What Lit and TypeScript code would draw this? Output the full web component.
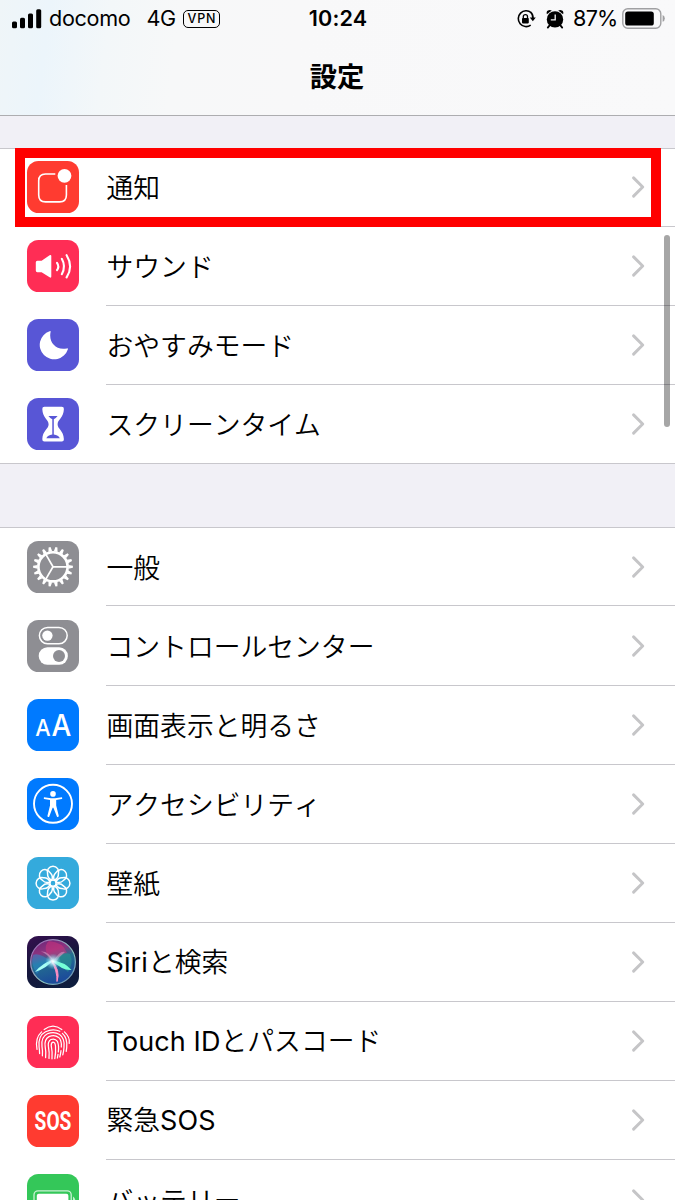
import { LitElement, html, svg, css } from "lit";
import { customElement, property } from "lit/decorators.js";

const line = (w: number, d: string) =>
  svg`<path d=${d} fill="none" stroke="#fff" stroke-width=${w} stroke-linecap="round" stroke-linejoin="round"/>`;

const range = (n: number) => Array.from({ length: n }, (_, i) => i);

const glyphs: Record<string, unknown> = {
  notify: svg`<path d="M28.3 13H18.5Q11.7 13 11.7 19.8V34Q11.7 40.9 18.5 40.9H32.6Q39.4 40.9 39.4 34V24" fill="none" stroke="#fff" stroke-width="1.6"/>
    <circle cx="37.5" cy="14.8" r="6.9" fill="#fff"/>`,
  sound: svg`<path d="M10.3 20.7H14.6L22.6 15.2Q24.3 14.3 24.3 16V36.6Q24.3 38.3 22.6 37.3L14.6 32.2H10.3Q8.8 32.2 8.8 30.6V22.2Q8.8 20.7 10.3 20.7Z" fill="#fff"/>
    ${line(2.1, "M30 22.8Q32.6 26.5 30 30.2")}${line(2.1, "M34.8 18.8Q39.2 26.5 34.8 34.2")}${line(2.1, "M39.6 15.2Q46.6 26.5 39.6 37.4")}`,
  moon: svg`<path d="M22.6 12.2Q23.9 11.6 23.6 13C21.4 23 28.6 31.8 39.8 29.4Q41.4 29 40.8 30.4A14.4 14.4 0 1 1 22.6 12.2Z" fill="#fff"/>`,
  glass: svg`<path d="M17.4 8.8H34.8Q37 8.8 36.9 11C36.6 20 30.6 21.4 30.6 26.2C30.6 31 36.6 32.4 36.9 41.2Q37 43.4 34.8 43.4H17.4Q15.2 43.4 15.3 41.2C15.6 32.4 21.6 31 21.6 26.2C21.6 21.4 15.6 20 15.3 11Q15.2 8.8 17.4 8.8Z" fill="#fff"/>
    <path d="M21.4 18.1H30.6Q28.8 20.4 26.8 21.2V36.6Q31.4 37.4 32.8 40.2H19.3Q20.8 37.4 25.3 36.6V21.2Q23.2 20.4 21.4 18.1Z" fill="#5856d6"/>`,
  gear: svg`<g transform="translate(26 25.8)">
    <circle r="14.6" fill="none" stroke="#fff" stroke-width="2.6"/>
    ${range(18).map(i => svg`<path d="M15.4 -1.9L19.9 -1V1L15.4 1.9Z" fill="#fff" transform="rotate(${i * 20})"/>`)}
    ${[0, 120, 240].map(a => svg`<path d="M0 0H14" stroke="#fff" stroke-width="1.7" transform="rotate(${a})"/>`)}
    </g>`,
  toggles: svg`<rect x="12.4" y="7.4" width="27.8" height="16.4" rx="8.2" fill="none" stroke="#fff" stroke-width="1.5"/>
    <circle cx="20.4" cy="15.6" r="5.2" fill="#fff"/>
    <rect x="11.7" y="27.3" width="29.2" height="17.4" rx="8.7" fill="#fff"/><circle cx="32" cy="36" r="6" fill="#8e8e93"/>`,
  display: svg`<text x="8.3" y="36.8" font-size="23" textLength="15.4" lengthAdjust="spacingAndGlyphs" class="aa">A</text>
    <text x="24.6" y="36.8" font-size="30" textLength="19.8" lengthAdjust="spacingAndGlyphs" class="aa">A</text>`,
  access: svg`<circle cx="26" cy="25.8" r="19" fill="none" stroke="#fff" stroke-width="1.9"/>
    <circle cx="26" cy="15.9" r="2.8" fill="#fff"/>
    <path d="M17.1 19.2L24 20.2H28L34.9 19.2Q35.8 20.2 34.8 20.9L29.2 22V27.6L31.8 38Q31.4 39.4 30 38.7L26.4 29.8H25.6L22.2 38.7Q20.6 39.4 20.4 38L23 27.6V22L17.2 20.9Q16.2 20.2 17.1 19.2Z" fill="#fff"/>`,
  flower: svg`<g transform="translate(26 26.2)" fill="none" stroke="#fff" stroke-width="1.5">
    <circle r="3.1"/>
    ${range(8).map(i => svg`<path d="M2.9 -1.2C4.2 -4 6.4 -5.6 9.4 -5.4A5.7 5.7 0 1 1 9.4 5.4C6.4 5.6 4.2 4 2.9 1.2" transform="rotate(${i * 45})"/>`)}
    </g>`,
  siri: svg`<defs>
      <linearGradient id="orb" x1="0" y1="0" x2="0.3" y2="1"><stop offset="0" stop-color="#6b2378"/><stop offset=".35" stop-color="#8c3480"/><stop offset=".55" stop-color="#24708f"/><stop offset="1" stop-color="#1c4c9a"/></linearGradient>
      <radialGradient id="glow"><stop offset="0" stop-color="#fff"/><stop offset=".35" stop-color="#c9f4ff" stop-opacity=".75"/><stop offset="1" stop-color="#6ad5e8" stop-opacity="0"/></radialGradient>
      <linearGradient id="ring" x1="0" y1="0" x2="1" y2="1"><stop offset="0" stop-color="#a05ab4"/><stop offset=".6" stop-color="#8fc9c0"/><stop offset="1" stop-color="#5d7fb0"/></linearGradient>
    </defs>
    <circle cx="26" cy="26" r="22.4" fill="url(#orb)" stroke="url(#ring)" stroke-width="1.2"/>
    <path d="M26 26Q32 14 43 18Q47 27 41 36Q34 29 26 26Z" fill="#2a9c92" opacity=".5"/>
    <path d="M25 26Q14 12 22 5Q36 6 40 17Q34 17 25 26Z" fill="#d8337c" opacity=".5"/>
    <path d="M25 26Q12 16 6 19Q3 28 10 38Q17 28 25 26Z" fill="#2a8fd2" opacity=".5"/>
    <path d="M14 15.5Q22 15 26.5 25Q33 14 38 16Q33 20 28 27Q19 17 14 15.5Z" fill="#f2b4dc" opacity=".45"/>
    <path d="M8 36Q15 27 27 23.5Q20 32 8 36Z" fill="#a6fff4"/>
    <path d="M24 24Q38 26 44.5 34Q36 35 24 24Z" fill="#76ffd6"/>
    <path d="M24 24Q34 34 30 45.5Q30.5 35 24 24Z" fill="#ff8fc4" stroke="#ff8fc4" stroke-width="1"/>
    <circle cx="26" cy="25.5" r="8" fill="url(#glow)"/>`,
  touch: svg`${[
    "M17.2 13.6Q26 6.8 34.8 13.6",
    "M10 33.4Q7.8 22 14.6 15.9",
    "M37.4 15.9Q43.4 21.4 42.2 27.4",
    "M12.6 37.6Q12.6 34.5 12.1 31Q10.9 19.5 18.6 15.7Q26 12.2 32.8 15.3",
    "M35.4 17.4Q40.7 22 39.7 31.6L39.2 35.4",
    "M15.4 39.8Q15.8 35 15 30.6Q13.8 21 20.4 17.8Q27 14.9 32.6 18.5Q38 22.4 37 31.2Q36.8 35 35.8 38.8",
    "M18.6 41.6Q19.2 36 18.2 30.8Q17 23.4 22 20.6Q27.4 18.2 31.6 21.4Q34.9 24.4 34.3 31",
    "M34 34.6Q33.6 38 32.8 41",
    "M22 42.4Q22.6 36.6 21.4 30.4Q20.6 25.4 24 23.5Q28 22 30.4 25.4Q32.2 29.4 31.3 36",
    "M31 38.4L30.4 42",
    "M25 42.8Q25.6 36 24.2 29.4Q24.2 26.2 26.2 26.2Q28.2 26.4 28.5 30.2Q29 36.5 27.8 42.6",
  ].map(d => line(1.25, d))}`,
  sos: svg`<g transform="translate(26 34.9) scale(.76 1)"><text x="0" y="0" font-size="25.2" text-anchor="middle" class="sos">SOS</text></g>`,
  battery: svg`<rect x="7" y="16.8" width="37.2" height="20" rx="4" fill="none" stroke="#c9f2d3" stroke-width="1.3"/>
    <rect x="9.8" y="19.8" width="31.6" height="14" rx="2" fill="#fff"/><path d="M46 22.5Q48.6 24 48.4 28H46Z" fill="#c9f2d3"/>`,
};

@customElement("settings-row")
export class SettingsRow extends LitElement {
  @property() icon = "";
  @property() color = "";
  @property() label = "";

  static styles = css`
    :host { display: flex; height: 79.15px; box-sizing: border-box; padding-left: 27px; background: #fff; }
    :host([first]) { border-top: 1px solid #c8c7cc; }
    .tile { flex: none; width: 52px; height: 52px; border-radius: 11.5px; margin: 13.4px 27px 0 0; overflow: hidden; }
    :host([first]) .tile { margin-top: 12.6px; }
    .tile svg { display: block; }
    .body { flex: 1; display: flex; align-items: center; justify-content: space-between; padding: 0 30px 0 0.5px; box-sizing: border-box; border-bottom: 1px solid #c8c7cc; }
    :host([last]) { padding-left: 0; border-bottom: 1px solid #c8c7cc; }
    :host([last]) .tile { margin-left: 27px; }
    :host([last]) .body { border-bottom: 0; }
    .label { font: 400 26.8px/40px "Noto Sans CJK JP", sans-serif; font-weight: 350; font-kerning: none; color: #000; white-space: nowrap; }
    .latin { font: 400 27px/40px Inter, sans-serif; letter-spacing: 0.1px; }
    .aa { font-family: Inter, sans-serif; font-weight: 500; fill: #fff; }
    .sos { font-family: Roboto, sans-serif; font-weight: 700; fill: #fff; }
  `;

  render() {
    const parts = this.label.split(/([A-Za-z ]+)/).filter(Boolean);
    return html`
      <div class="tile" style="background:${this.color}">
        <svg width="52" height="52" viewBox="0 0 52 52">${glyphs[this.icon]}</svg>
      </div>
      <div class="body">
        <span class="label">${parts.map(p => (/[A-Za-z]/.test(p) ? html`<span class="latin">${p}</span>` : p))}</span>
        <svg width="14" height="22" viewBox="0 0 14 22"><path d="M2.6 1.9L11.7 11L2.6 20.1" fill="none" stroke="#c5c5c7" stroke-width="2.9" stroke-linecap="round" stroke-linejoin="round"/></svg>
      </div>`;
  }
}

const groups = [
  [
    ["notify", "#ff3b30", "通知"],
    ["sound", "#ff2d55", "サウンド"],
    ["moon", "#5856d6", "おやすみモード"],
    ["glass", "#5856d6", "スクリーンタイム"],
  ],
  [
    ["gear", "#8e8e93", "一般"],
    ["toggles", "#8e8e93", "コントロールセンター"],
    ["display", "#007aff", "画面表示と明るさ"],
    ["access", "#007aff", "アクセシビリティ"],
    ["flower", "#34aadc", "壁紙"],
    ["siri", "linear-gradient(160deg,#35104f,#17163c 45%,#0d1f3f)", "Siriと検索"],
    ["touch", "#ff2d55", "Touch IDとパスコード"],
    ["sos", "#ff3b30", "緊急SOS"],
    ["battery", "#34c759", "バッテリー"],
  ],
];

@customElement("app-root")
export class AppRoot extends LitElement {
  static styles = css`
    :host { display: block; position: relative; width: 675px; height: 1200px; overflow: hidden; background: #f1f0f6; font-family: Inter, sans-serif; color: #000; }
    .header { height: 116px; box-sizing: border-box; border-bottom: 1px solid #adadb0; background: linear-gradient(97deg, #eff5f8 0, #ecf5fb 50px, #f3f7f9 110px, #f7f8f9 180px, #f8f8f9 300px, #f9f9fa 100%); }
    .status { display: grid; grid-template-columns: 1fr auto 1fr; align-items: center; height: 37px; padding: 0 10px 0 12px; font-size: 21.6px; line-height: 37px; }
    .left, .right { display: flex; align-items: center; }
    .right { justify-content: flex-end; }
    .status svg { display: block; flex: none; }
    .carrier { margin-left: 7px; letter-spacing: -0.3px; }
    .net { margin-left: 16px; letter-spacing: -0.6px; }
    .vpn { margin-left: 8px; width: 37px; height: 18px; box-sizing: border-box; border: 1.6px solid #000; border-radius: 5px; font-size: 12.5px; line-height: 15.4px; text-align: center; letter-spacing: 0.8px; font-weight: 500; }
    .time { font-weight: 600; letter-spacing: 0.1px; margin-right: 1px; }
    .alarm { margin: 0 9px 0 10px; }
    .pct { letter-spacing: -0.8px; margin-right: 4.5px; }
    .title { margin: 17px 0 0; padding-right: 1px; font: 700 27.3px/42px "Noto Sans CJK JP", sans-serif; text-align: center; }
    .group { margin-top: 31.6px; background: #fff; }
    .group + .group { margin-top: 63.2px; }
    .mark { position: absolute; left: 14.5px; top: 148px; width: 646px; height: 79px; box-sizing: border-box; border: 10px solid #f00; }
    .scroll { position: absolute; left: 664px; top: 235px; width: 6px; height: 192px; border-radius: 3px; background: rgba(0, 0, 0, 0.35); }
  `;

  render() {
    return html`
      <div class="header">
        <div class="status">
          <div class="left">
            <svg width="30" height="20" viewBox="0 0 30 20"><rect x="0" y="12.6" width="5" height="6.6" rx="1.5"/><rect x="8" y="8.8" width="5" height="10.4" rx="1.5"/><rect x="16" y="4.6" width="5" height="14.6" rx="1.5"/><rect x="24.2" y=".2" width="5" height="19" rx="1.5"/></svg>
            <span class="carrier">docomo</span><span class="net">4G</span><span class="vpn">VPN</span>
          </div>
          <span class="time">10:24</span>
          <div class="right">
            <svg width="20" height="20" viewBox="0 0 20 20"><path d="M15.2 3.6A7.9 7.9 0 1 0 14.7 16.2M14.6 3.2Q17.4 5.8 17 10" fill="none" stroke="#000" stroke-width="1.6"/><path d="M13.8 8.6H19.8L16.8 12.2Z"/><rect x="6" y="9" width="6.8" height="5.4" rx=".8"/><path d="M7.3 9.4V7.6Q7.3 5.6 9.4 5.6T11.5 7.6V9.4" fill="none" stroke="#000" stroke-width="1.3"/></svg>
            <svg class="alarm" width="18" height="20" viewBox="0 0 18 20"><circle cx="9" cy="10.4" r="8.2"/><path d="M.9 5.2Q0 2.4 2 1.4T5.8 1.6ZM17.1 5.2Q18 2.4 16 1.4T12.2 1.6Z"/><path d="M3.6 16.4L1.8 18.6M14.4 16.4L16.2 18.6" stroke="#000" stroke-width="1.8" stroke-linecap="round"/><path d="M9.2 5.4V10.8H4.8" fill="none" stroke="#f8f8f9" stroke-width="1.3"/></svg>
            <span class="pct">87%</span>
            <svg width="43" height="22" viewBox="0 0 43 22"><rect x=".8" y=".7" width="38" height="19.6" rx="5" fill="none" stroke="#a0a0a2" stroke-width="1.4"/><rect x="3.2" y="3.4" width="28.6" height="14.2" rx="2.6"/><path d="M40.6 7Q42.8 8 42.8 10.4T40.6 13.8Z" fill="#a0a0a2"/></svg>
          </div>
        </div>
        <h1 class="title">設定</h1>
      </div>
      ${groups.map(rows => html`<div class="group">${rows.map(([icon, color, label], i) =>
        html`<settings-row .icon=${icon} .color=${color} .label=${label} ?first=${i === 0} ?last=${i === rows.length - 1}></settings-row>`)}</div>`)}
      <div class="mark"></div>
      <div class="scroll"></div>`;
  }
}
